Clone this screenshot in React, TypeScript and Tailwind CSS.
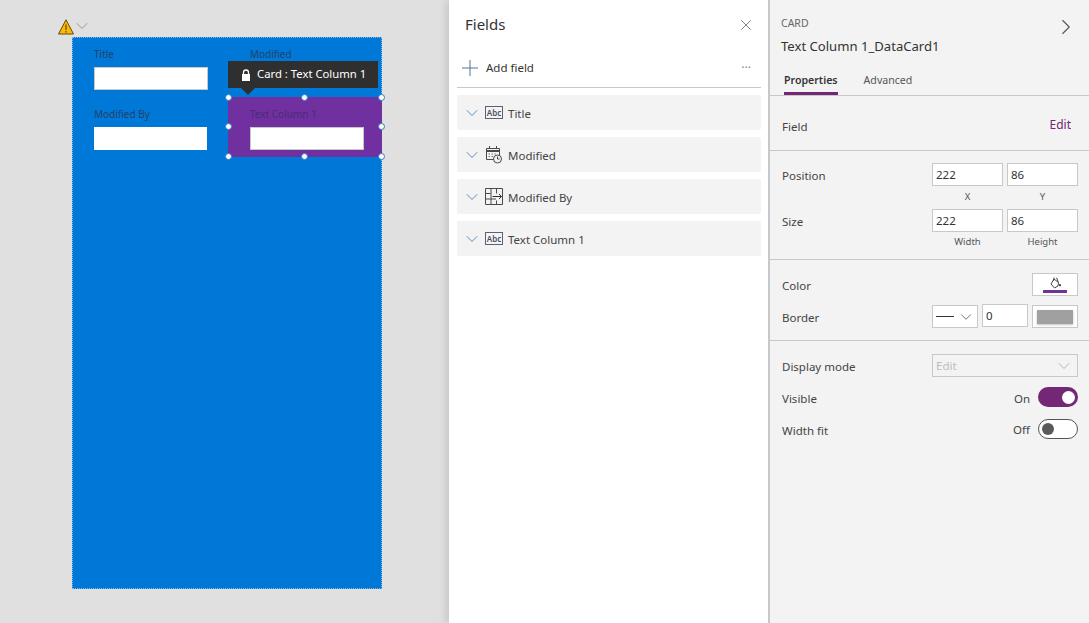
import React from 'react';
import { ChevronDown, ChevronRight, Plus, X } from 'lucide-react';

const FONT = { fontFamily: '"Noto Sans", "Open Sans", sans-serif' };

const AbcIcon = () => (
  <span className="flex h-[13px] w-[18px] items-center justify-center border border-[#5f5f70] text-[8px] leading-none font-semibold text-[#44506a]">
    Abc
  </span>
);

const CalendarClockIcon = () => (
  <svg width="18" height="19" viewBox="0 0 18 19" fill="none" stroke="#4a4a4a" strokeWidth="1">
    <path d="M1.500 3.500h13v11h-13z" />
    <path d="M1.500 6h13" strokeWidth="2" />
    <path d="M4.500 1v3M11.500 1v3" />
    <path d="M3.500 9h1.500M6.500 9h1.500M9.500 9h1.500M3.500 11.500h1.500M6.500 11.500h1.500" stroke="#777" />
    <circle cx="12.500" cy="14" r="4" fill="#f3f3f3" />
    <path d="M12.500 11.500V14h2" />
  </svg>
);

const TableArrowIcon = () => (
  <svg width="18" height="17" viewBox="0 0 18 17" fill="none" stroke="#4a4a4a" strokeWidth="1">
    <path d="M.5 .5h17v16H.5z" />
    <path d="M6 .5v16M11.500 .5v5M.5 5.500h5M.5 11h10.500M11.500 12.500v4" />
    <path d="M7.500 8.500h9M14 6 16.500 8.500 14 11" stroke="#333" />
  </svg>
);

const WarningIcon = () => (
  <svg width="16" height="16" viewBox="0 0 16 16">
    <path d="M8 .8 15.500 15H.5z" fill="#fdb900" stroke="#5c4a10" strokeWidth="1" />
    <path d="M8 5.500v5.500M8 12v1.500" stroke="#3a2f10" strokeWidth="1" />
  </svg>
);

const BucketIcon = () => (
  <svg width="14" height="12" viewBox="0 0 14 12" fill="none" stroke="#444" strokeWidth="1">
    <path d="M6 2 10.500 5.500 10 9 6.500 11 3 7z" fill="#fff" />
    <path d="M6 .5 5.500 4M8.500 .8 10.500 5.500" />
    <path d="M12 7c.8 1 .8 2 0 2.300-.8-.3-.8-1.300 0-2.300z" fill="#444" />
  </svg>
);

const LockIcon = () => (
  <svg width="10" height="12" viewBox="0 0 10 12" fill="none">
    <path d="M2.500 5.500V3.500a2.500 2.500 0 0 1 5 0v2" stroke="#fff" strokeWidth="1.300" />
    <rect x="1" y="5" width="8" height="7" fill="#fff" />
  </svg>
);

const Handle = ({ className }: { className: string }) => (
  <span className={`absolute h-[7px] w-[7px] rounded-full border border-[#2f7bc8] bg-white ${className}`} />
);

const FormCard = ({ label, dim, flat, hidden }: { label: string; dim?: boolean; flat?: boolean; hidden?: boolean }) => (
  <div className="h-[60px] pt-[10px] pl-[22px]">
    <div className={`text-[10px] leading-[14px] ${dim ? 'text-[#4a2a78]' : 'text-[#23406b]'}`}>{label}</div>
    {/* the Modified input sits behind the tooltip */}
    {!hidden && <div className={`mt-[6px] h-[23px] bg-white ${flat ? 'w-[113px]' : 'w-[114px] border border-[#c8c8c8]'}`} />}
  </div>
);

const fields = [
  { name: 'Title', icon: <AbcIcon /> },
  { name: 'Modified', icon: <CalendarClockIcon /> },
  { name: 'Modified By', icon: <TableArrowIcon /> },
  { name: 'Text Column 1', icon: <AbcIcon /> },
];

const TextBox = ({ value, className = 'w-[71px]' }: { value: string; className?: string }) => (
  <div className={`flex h-[23px] items-center border border-[#c8c8c8] bg-white pl-[3px] text-[11.5px] text-[#333] ${className}`}>
    {value}
  </div>
);

const Label = ({ children }: { children: React.ReactNode }) => (
  <span className="pt-[3px] text-[11.5px] leading-[16px] text-[#444]">{children}</span>
);

const App: React.FC = () => {
  return (
    <div className="flex h-[623px] w-[1089px] overflow-hidden bg-[#e0e0e0]" style={FONT}>
      {/* canvas */}
      <div className="w-[449px] shrink-0 pt-[37px] pl-[72px]">
        <div className="relative h-[552px] w-[310px] border border-dotted border-[#7db4e6] bg-[#0078d7]">
          <div className="absolute -top-[19px] -left-[15px]">
            <WarningIcon />
          </div>
          <ChevronDown className="absolute -top-[22px] -left-[1px] h-[20px] w-[20px] text-[#8a8a8a]" strokeWidth={1} />
          <div className="-m-px grid grid-cols-[156px_154px]">
            <FormCard label="Title" />
            <FormCard label="Modified" hidden />
            <FormCard label="Modified By" flat />
            <div className="relative bg-[#7030a0]">
              <FormCard label="Text Column 1" dim />
              <Handle className="-top-[3px] -left-[3px]" />
              <Handle className="-top-[3px] left-[73px]" />
              <Handle className="-top-[3px] -right-[3px]" />
              <Handle className="top-[26px] -left-[3px]" />
              <Handle className="top-[26px] -right-[3px]" />
              <Handle className="-bottom-[3px] -left-[3px]" />
              <Handle className="-bottom-[3px] left-[73px]" />
              <Handle className="-bottom-[3px] -right-[3px]" />
              <div className="absolute -top-[36px] left-0 flex h-[27px] w-[150px] items-center gap-[6px] bg-[#2f2f2f] pl-[13px] text-[11.3px] text-white">
                <LockIcon />
                Card : Text Column 1
              </div>
              <div className="absolute -top-[9px] left-[13px] h-0 w-0 border-x-[7px] border-t-[7px] border-x-transparent border-t-[#2f2f2f]" />
            </div>
          </div>
        </div>
      </div>

      {/* fields pane */}
      <div className="w-[319px] shrink-0 bg-white pr-[7px] pl-[8px] shadow-[-3px_0_8px_rgba(0,0,0,0.12)]">
        <div className="flex h-[49px] items-center justify-between pr-[6px] pl-[8px]">
          <span className="text-[15px] text-[#333]">Fields</span>
          <X className="h-[18px] w-[18px] text-[#555]" strokeWidth={1} />
        </div>
        <div className="flex h-[39px] items-center border-b border-[#c8c8c8] pr-[10px]">
          <Plus className="h-[26px] w-[26px] text-[#4a6f98]" strokeWidth={0.9} />
          <span className="ml-[3px] text-[11.5px] text-[#333]">Add field</span>
          <span className="ml-auto text-[12px] leading-none text-[#888]">···</span>
        </div>
        <div className="mt-[7px] flex flex-col gap-[7px]">
          {fields.map((f) => (
            <div key={f.name} className="flex h-[35px] items-center rounded-[2px] bg-[#f3f3f3] pl-[5px]">
              <ChevronDown className="h-[20px] w-[20px] text-[#3f7ab5]" strokeWidth={1} />
              <span className="ml-[3px] flex w-[23px] justify-start">{f.icon}</span>
              <span className="pt-[2px] text-[11.5px] text-[#444]">{f.name}</span>
            </div>
          ))}
        </div>
      </div>

      {/* properties pane */}
      <div className="flex-1 border-l-2 border-[#c8c8c8] bg-[#f3f3f3] text-[#444]">
        <div className="relative h-[96px] border-b border-[#c8c8c8] px-[11px] pt-[15px]">
          <div className="text-[10.5px] leading-[16px] text-[#666]">CARD</div>
          <div className="mt-[5px] text-[13.1px] leading-[20px] text-[#333]">Text Column 1_DataCard1</div>
          <ChevronRight className="absolute top-[14px] right-[10px] h-[26px] w-[26px] text-[#555]" strokeWidth={1} />
          <div className="absolute bottom-0 left-[14px] flex gap-[26px] text-[10.6px]">
            <span className="border-b-[3px] border-[#742774] pb-[3px] font-semibold text-[#333]">Properties</span>
            <span className="pb-[3px] text-[#555]">Advanced</span>
          </div>
        </div>

        <div className="flex h-[55px] items-center justify-between border-b border-[#c8c8c8] pr-[18px] pl-[12px]">
          <span className="pt-[4px]">
            <Label>Field</Label>
          </span>
          <span className="pt-[4px] text-[12px] text-[#742774]">Edit</span>
        </div>

        <div className="h-[109px] border-b border-[#c8c8c8] pt-[12px] pr-[11px] pl-[12px]">
          <div className="flex items-center justify-between">
            <Label>Position</Label>
            <div className="flex gap-[4px]">
              <TextBox value="222" />
              <TextBox value="86" />
            </div>
          </div>
          <div className="ml-auto flex h-[23px] w-[146px] gap-[4px] text-center text-[9.500px] leading-[22px] text-[#555]">
            <span className="w-[71px]">X</span>
            <span className="w-[71px]">Y</span>
          </div>
          <div className="flex items-center justify-between">
            <Label>Size</Label>
            <div className="flex gap-[4px]">
              <TextBox value="222" />
              <TextBox value="86" />
            </div>
          </div>
          <div className="ml-auto flex w-[146px] gap-[4px] text-center text-[9.500px] leading-[20px] text-[#555]">
            <span className="w-[71px]">Width</span>
            <span className="w-[71px]">Height</span>
          </div>
        </div>

        <div className="h-[81px] border-b border-[#c8c8c8] pt-[13px] pr-[11px] pl-[12px]">
          <div className="flex items-center justify-between">
            <Label>Color</Label>
            <div className="flex h-[23px] w-[46px] flex-col items-center border border-[#c8c8c8] bg-white pt-[3px]">
              <BucketIcon />
              <div className="mt-[1px] h-[3px] w-[24px] bg-[#7030a0]" />
            </div>
          </div>
          <div className="mt-[9px] flex items-center justify-between">
            <Label>Border</Label>
            <div className="flex gap-[4px]">
              <div className="flex h-[23px] w-[46px] items-center border border-[#c8c8c8] bg-white pr-[2px] pl-[3px]">
                <div className="h-px w-[18px] bg-[#333]" />
                <ChevronDown className="ml-auto h-[18px] w-[18px] text-[#444]" strokeWidth={1} />
              </div>
              <TextBox value="0" className="-mt-px w-[46px]" />
              <div className="flex h-[23px] w-[46px] items-center justify-center border border-[#c8c8c8] bg-white">
                <div className="h-[14px] w-[36px] bg-[#a0a0a0] shadow-[0_1px_2px_rgba(0,0,0,0.25)]" />
              </div>
            </div>
          </div>
        </div>

        <div className="pt-[13px] pr-[11px] pl-[12px]">
          <div className="flex items-center justify-between">
            <Label>Display mode</Label>
            <div className="flex h-[23px] w-[146px] items-center justify-between border border-[#c8c8c8] pr-[3px] pl-[3px] text-[11.5px] text-[#bdbdbd]">
              Edit
              <ChevronDown className="h-[20px] w-[20px] text-[#a8a8a8]" strokeWidth={1} />
            </div>
          </div>
          <div className="mt-[9px] flex h-[22px] items-center justify-between">
            <Label>Visible</Label>
            <div className="flex items-center gap-[8px]">
              <span className="pt-[3px] text-[11.5px]">On</span>
              <div className="flex h-[20px] w-[40px] items-center justify-end rounded-full bg-[#742774] pr-[3px]">
                <div className="h-[13px] w-[13px] rounded-full bg-white" />
              </div>
            </div>
          </div>
          <div className="mt-[10px] flex h-[22px] items-center justify-between">
            <Label>Width fit</Label>
            <div className="flex items-center gap-[8px]">
              <span className="pt-[1px] text-[11.5px]">Off</span>
              <div className="flex h-[20px] w-[40px] items-center rounded-full border border-[#555] bg-white pl-[3px]">
                <div className="h-[12px] w-[12px] rounded-full bg-[#5a5a5a]" />
              </div>
            </div>
          </div>
        </div>
      </div>
    </div>
  );
};

export default App;
